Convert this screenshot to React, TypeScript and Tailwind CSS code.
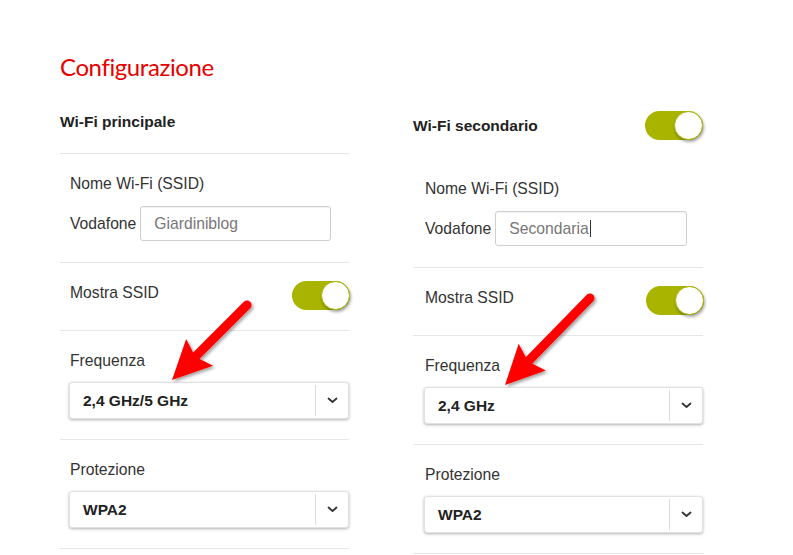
import React from "react";

const Toggle = () => (
  <div className="relative w-[58px] h-[29px] rounded-full bg-[#a8b400] shrink-0">
    <div className="absolute right-0 top-0 w-[29px] h-[29px] rounded-full bg-white border border-[#a8b400] shadow-[1px_2px_3px_rgba(0,0,0,0.35)]" />
  </div>
);

const Chevron = () => (
  <svg width="11" height="7" viewBox="0 0 11 7">
    <path d="M1.5 1.5 L5.5 5 L9.5 1.5" fill="none" stroke="#333" strokeWidth="1.8" strokeLinecap="round" strokeLinejoin="round" />
  </svg>
);

const Select = ({ value }: { value: string }) => (
  <div className="ml-[-1px] h-[37px] flex items-center rounded-[3px] border border-[#e2e2e2] bg-white shadow-[0_1px_3px_rgba(0,0,0,0.3)]">
    <div className="flex-1 pl-[13px] text-[15.5px] font-bold text-[#222]">{value}</div>
    <div className="w-px h-[31px] bg-[#dcdcdc]" />
    <div className="w-[32px] flex items-center justify-center">
      <Chevron />
    </div>
  </div>
);

const Label = ({ children }: { children: React.ReactNode }) => (
  <div className="text-[15.7px] leading-[18px] text-[#333]">{children}</div>
);

const Column = ({
  title,
  header,
  value,
  caret,
  freq,
  inputW,
}: {
  title: string;
  header: "divider" | "toggle";
  value: string;
  caret?: boolean;
  freq: string;
  inputW: string;
}) => {
  const pl = header === "divider" ? "pl-[10px]" : "pl-[12px]";
  return (
    <div className="flex flex-col">
      {header === "divider" ? (
        <div className="pt-[2px] pb-[22px] border-b border-[#e6e6e6]">
          <div className="text-[15.5px] leading-[18px] font-bold text-[#222]">{title}</div>
        </div>
      ) : (
        <div className="flex items-center justify-between h-[29px]">
          <div className="text-[15.5px] leading-[18px] font-bold text-[#222]">{title}</div>
          <Toggle />
        </div>
      )}
      <div className={`${header === "divider" ? "pt-[21px]" : "pt-[40px]"} pb-[21px] ${pl} border-b border-[#e6e6e6]`}>
        <Label>Nome Wi-Fi (SSID)</Label>
        <div className="mt-[13px] flex items-center gap-[4px]">
          <Label>Vodafone</Label>
          <div className={`${inputW} h-[35px] flex items-center rounded-[3px] border border-[#cfcfcf] pl-[13px] shadow-[inset_0_1px_1px_rgba(0,0,0,0.06)]`}>
            <span className="text-[15.7px] text-[#777]">{value}</span>
            {caret && <span className="w-px h-[17px] bg-[#333] ml-px" />}
          </div>
        </div>
      </div>
      <div className={`pt-[18px] pb-[20px] ${pl} border-b border-[#e6e6e6] flex items-start justify-between`}>
        <div className="pt-[3px]">
          <Label>Mostra SSID</Label>
        </div>
        <div className="mr-[-1px]">
          <Toggle />
        </div>
      </div>
      <div className={`pt-[21px] pb-[20px] ${pl} border-b border-[#e6e6e6]`}>
        <Label>Frequenza</Label>
        <div className="mt-[12px]">
          <Select value={freq} />
        </div>
      </div>
      <div className={`pt-[21px] pb-[20px] ${pl} border-b border-[#e6e6e6]`}>
        <Label>Protezione</Label>
        <div className="mt-[12px]">
          <Select value="WPA2" />
        </div>
      </div>
    </div>
  );
};

const Arrow = ({
  tail,
  tip,
  headLen,
  halfW,
}: {
  tail: [number, number];
  tip: [number, number];
  headLen: number;
  halfW: number;
}) => {
  const dx = tip[0] - tail[0];
  const dy = tip[1] - tail[1];
  const len = Math.hypot(dx, dy);
  const ux = dx / len;
  const uy = dy / len;
  const px = -uy;
  const py = ux;
  const bx = tip[0] - ux * headLen;
  const by = tip[1] - uy * headLen;
  const back = 6;
  const c1 = [bx + px * halfW - ux * back, by + py * halfW - uy * back];
  const c2 = [bx - px * halfW - ux * back, by - py * halfW - uy * back];
  return (
    <g filter="url(#shadow)">
      <line x1={tail[0]} y1={tail[1]} x2={bx + ux * 4} y2={by + uy * 4} stroke="#f00" strokeWidth="9" strokeLinecap="round" />
      <polygon points={`${tip[0]},${tip[1]} ${c1[0]},${c1[1]} ${bx},${by} ${c2[0]},${c2[1]}`} fill="#f00" />
    </g>
  );
};

export default function App() {
  return (
    <div
      className="relative w-[793px] h-[555px] overflow-hidden bg-white pl-[60px] pt-[52px]"
      style={{ fontFamily: '"Liberation Sans", Arial, sans-serif' }}
    >
      <h1
        className="text-[24px] leading-[30px] tracking-[-0.4px] text-[#e60000]"
        style={{ fontFamily: 'Lato, "Liberation Sans", sans-serif' }}
      >
        Configurazione
      </h1>
      <div className="mt-[29px] flex">
        <div className="w-[289px]">
          <Column title="Wi-Fi principale" header="divider" value="Giardiniblog" freq="2,4 GHz/5 GHz" inputW="w-[191px]" />
        </div>
        <div className="w-[290px] ml-[64px]">
          <Column title="Wi-Fi secondario" header="toggle" value="Secondaria" caret freq="2,4 GHz" inputW="w-[192px]" />
        </div>
      </div>
      <svg className="absolute left-0 top-0 pointer-events-none" width="793" height="555">
        <defs>
          <filter id="shadow" x="-20%" y="-20%" width="140%" height="140%">
            <feDropShadow dx="2" dy="2" stdDeviation="1.5" floodColor="#000" floodOpacity="0.35" />
          </filter>
        </defs>
        <Arrow tail={[247, 305]} tip={[172, 380]} headLen={33} halfW={19} />
        <Arrow tail={[590, 298]} tip={[505, 385]} headLen={33} halfW={19} />
      </svg>
    </div>
  );
}
